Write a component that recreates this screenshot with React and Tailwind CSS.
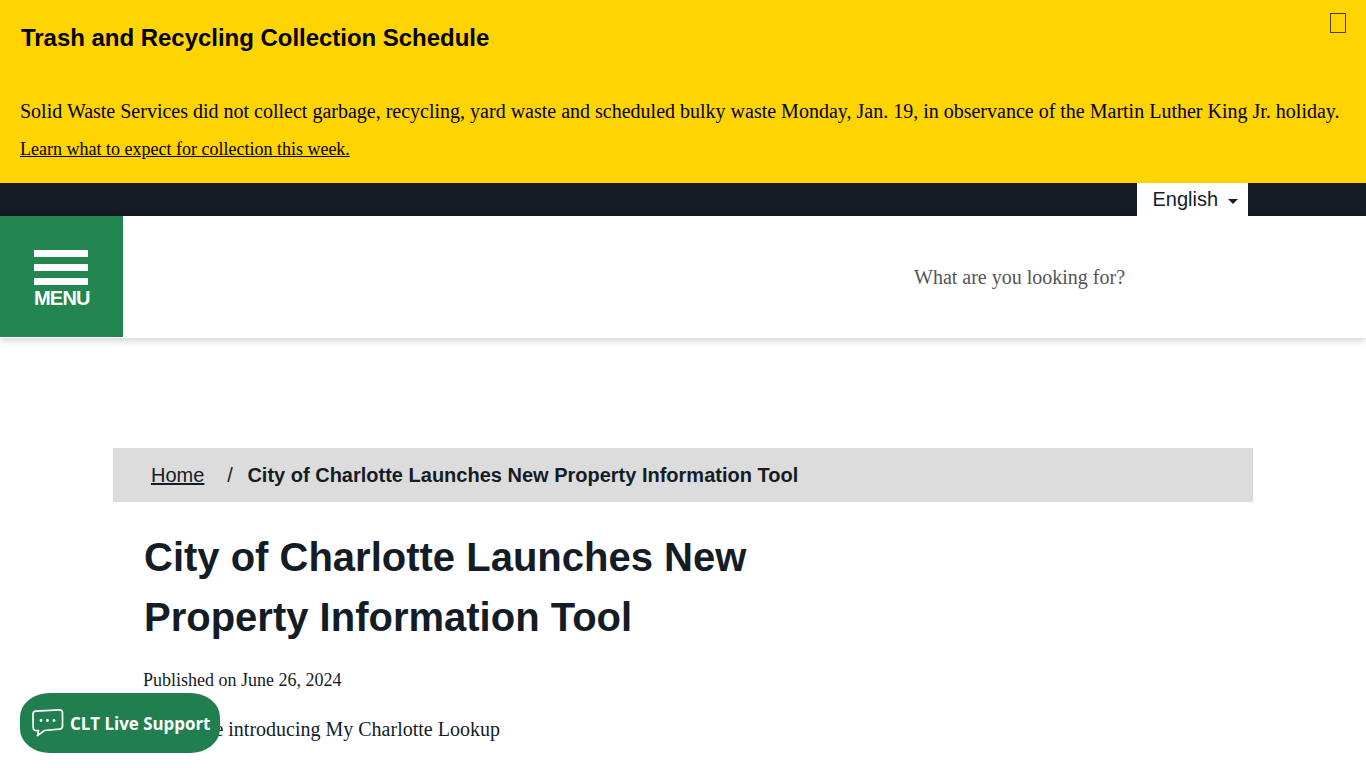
import React from 'react';

const Alert = () => (
    <section className="relative h-[183px] bg-[#ffd400] px-5 font-['Liberation_Serif',serif] text-black">
        <h2 className="pt-[22px] pl-px font-['Liberation_Sans',sans-serif] text-2xl leading-[32px] tracking-[-0.03px] font-bold">
            Trash and Recycling Collection Schedule
        </h2>
        <p className="mt-[41px] text-xl leading-[32px]">
            Solid Waste Services did not collect garbage, recycling, yard waste and scheduled bulky waste Monday, Jan. 19, in observance of the Martin Luther King Jr. holiday.
        </p>
        <p className="mt-[6px] text-lg leading-[32px]">
            <a href="#" className="underline">Learn what to expect for collection this week.</a>
        </p>
        <button className="absolute top-[13px] right-5 h-5 w-4 border border-[#4a3d00]" aria-label="Close"></button>
    </section>
);

const LanguageBar = () => (
    <div className="flex h-[33px] justify-end bg-[#141c26] pr-[118px]">
        <div className="flex w-[111px] items-center bg-white pb-[2px] pl-[15.5px] font-['Liberation_Sans',sans-serif] text-xl text-[#141c26]">
            English
            <span className="mt-[5px] ml-[10px] h-0 w-0 border-x-[5px] border-t-[5px] border-x-transparent border-t-[#141c26]"></span>
        </div>
    </div>
);

const Header = () => (
    <header className="flex h-[122px] bg-white shadow-[0_2px_8px_rgba(0,0,0,0.2)]">
        <button className="flex h-[121px] w-[123px] flex-col bg-[#23854f] pt-[34px] pl-[34px] text-left font-['Liberation_Sans',sans-serif] text-white">
            <span className="h-[7px] w-[54px] bg-white"></span>
            <span className="mt-[7px] h-[7px] w-[54px] bg-white"></span>
            <span className="mt-[7px] h-[7px] w-[54px] bg-white"></span>
            <span className="mt-px text-xl leading-[24px] font-bold tracking-[-0.8px]">MENU</span>
        </button>
        <div className="ml-[791px] pt-[47px] font-['Liberation_Serif',serif] text-xl leading-[28px] text-[#555]">
            What are you looking for?
        </div>
    </header>
);

const ChatButton = () => (
    <button className="absolute top-[693px] left-5 flex h-[60px] w-[200px] items-center rounded-[30px/24px] bg-[#217f4f] pl-3 font-['Open_Sans',sans-serif] text-white">
        <svg width="32" height="28" viewBox="0 0 32 28" fill="none" stroke="currentColor" strokeWidth="1.7" strokeLinejoin="round" strokeLinecap="round">
            <path d="M1 5 C1 3 2 2.4 4 2.2 L27 0.9 C29.6 0.8 30.5 2 30.5 4 L30.5 17 C30.5 19 29.5 20 27.5 20.2 L12.5 21.5 L5.5 26.6 L6.5 21.6 L4.5 21.6 C2.5 21.6 1.2 20.5 1.2 18.5 Z" />
            <circle cx="9" cy="11.5" r="0.6" fill="currentColor" />
            <circle cx="15.5" cy="11.5" r="0.6" fill="currentColor" />
            <circle cx="22" cy="11.5" r="0.6" fill="currentColor" />
        </svg>
        <span className="mt-[2px] ml-[6px] text-[16.9px] font-bold">CLT Live Support</span>
    </button>
);

const App = () => {
    return (
        <div className="relative h-screen overflow-hidden bg-white">
            <Alert />
            <LanguageBar />
            <Header />
            <main className="mx-[113px] mt-[110px]">
                <nav className="flex h-[54px] items-center bg-[#dcdcdc] pl-[38px] font-['Liberation_Sans',sans-serif] text-xl text-[#141c26]">
                    <a href="#" className="underline">Home</a>
                    <span className="mr-[14.5px] ml-[23px]">/</span>
                    <span className="font-bold">City of Charlotte Launches New Property Information Tool</span>
                </nav>
                <h1 className="mt-[25px] ml-[31px] w-[700px] font-['Liberation_Sans',sans-serif] text-[40px] leading-[60px] font-bold text-[#141c26]">
                    City of Charlotte Launches New Property Information Tool
                </h1>
                <p className="mt-[19px] ml-[30px] font-['Liberation_Serif',serif] text-lg leading-[28px] text-[#141c26]">
                    Published on June 26, 2024
                </p>
                <p className="mt-[21px] ml-[30px] font-['Liberation_Serif',serif] text-xl leading-[28px] text-[#141c26]">
                    We're live introducing My Charlotte Lookup
                </p>
            </main>
            <ChatButton />
        </div>
    );
};

export default App;
